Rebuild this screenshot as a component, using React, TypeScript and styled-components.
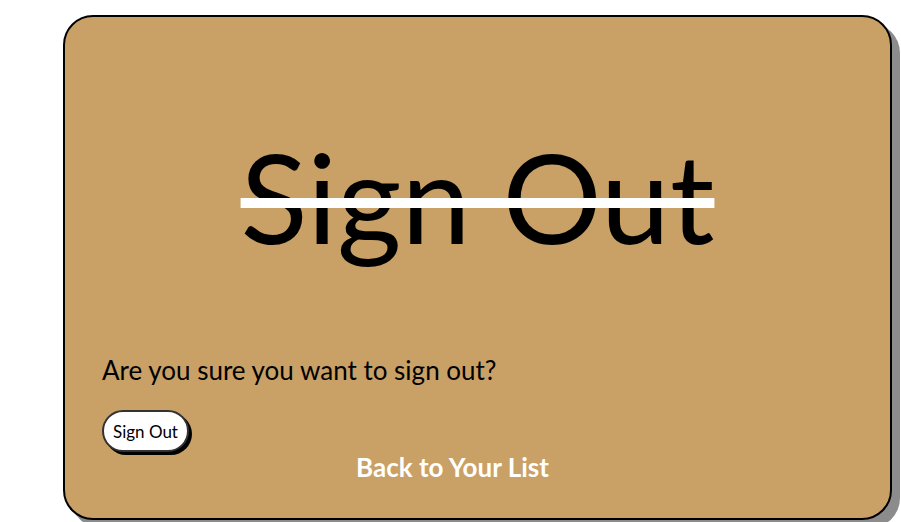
import React from "react";
import styled, { createGlobalStyle } from "styled-components";

const Global = createGlobalStyle`
  html, body { margin: 0; padding: 0; background: #ffffff; }
  body { font-family: "Lato", "Noto Sans", sans-serif; overflow: hidden; }
`;

const Page = styled.div`
  width: 901px;
  height: 522px;
  padding: 15px 0 0 63px;
  box-sizing: border-box;
`;

const Card = styled.main`
  width: 829px;
  height: 505px;
  box-sizing: border-box;
  background: #c9a065;
  border: 2px solid #000;
  border-radius: 30px;
  box-shadow: 8px 8px 0 #8c8c8c;
  display: flex;
  flex-direction: column;
  padding: 0 37px;
`;

const Title = styled.h1`
  margin: 104px 0 0;
  font-family: "Lato", sans-serif;
  font-weight: 400;
  font-size: 124px;
  line-height: 150px;
  text-align: center;
  color: #000;
  text-decoration: line-through;
  text-decoration-color: #fff;
  text-decoration-thickness: 10px;
`;

const Question = styled.p`
  margin: 84px 0 0;
  font-size: 26px;
  line-height: 30px;
  color: #000;
`;

const Button = styled.button`
  align-self: flex-start;
  margin-top: 25px;
  height: 42px;
  padding: 0 9px;
  border: 2px solid #333;
  border-radius: 21px;
  background: #fff;
  box-shadow: 3px 3px 0 #000;
  font-family: "Lato", sans-serif;
  font-size: 17px;
  color: #000;
`;

const BackRow = styled.div`
  display: flex;
  justify-content: center;
  padding-right: 50px;
  margin-top: 0;
`;

const BackLink = styled.a`
  font-size: 26px;
  line-height: 30px;
  font-weight: 700;
  color: #fff;
  text-decoration: none;
`;

export default function App() {
  return (
    <Page>
      <Global />
      <Card>
        <Title>Sign Out</Title>
        <Question>Are you sure you want to sign out?</Question>
        <Button>Sign Out</Button>
        <BackRow>
          <BackLink href="#">Back to Your List</BackLink>
        </BackRow>
      </Card>
    </Page>
  );
}
